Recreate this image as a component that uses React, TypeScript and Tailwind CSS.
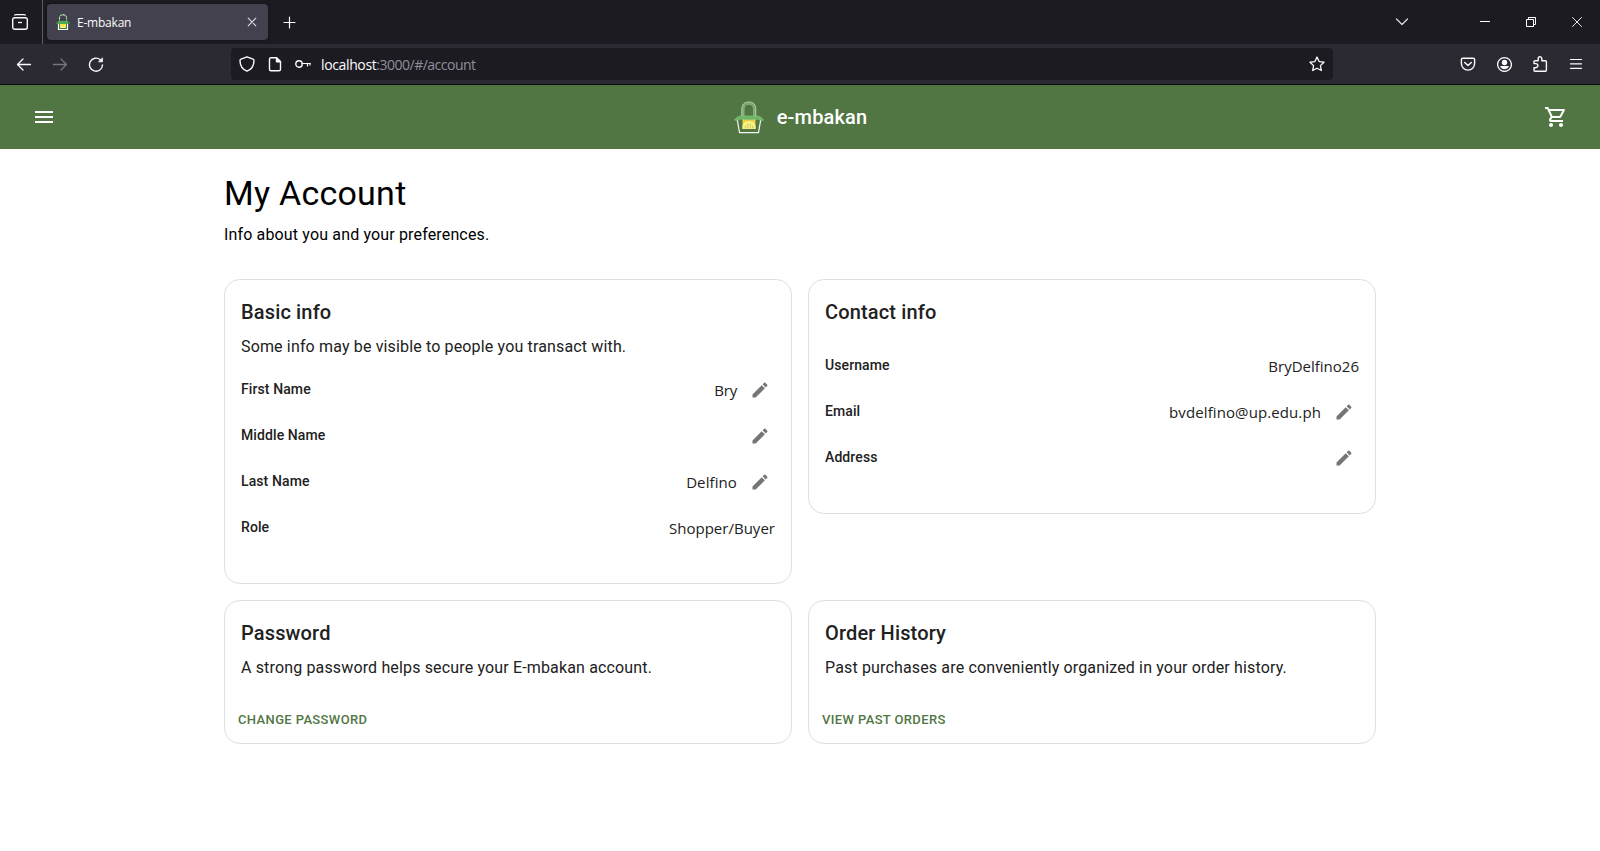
import React from "react";

type Row = { label: string; value: string; editable: boolean; valueClass?: string };

const basicRows: Row[] = [
  { label: "First Name", value: "Bry", editable: true, valueClass: "tracking-[-0.2px]" },
  { label: "Middle Name", value: "", editable: true },
  { label: "Last Name", value: "Delfino", editable: true, valueClass: "tracking-[0.1px]" },
  { label: "Role", value: "Shopper/Buyer", editable: false, valueClass: "tracking-[0.02px]" },
];

const contactRows: Row[] = [
  { label: "Username", value: "BryDelfino26", editable: false, valueClass: "tracking-normal" },
  { label: "Email", value: "bvdelfino@up.edu.ph", editable: true, valueClass: "tracking-[0.1px]" },
  { label: "Address", value: "", editable: true },
];

function Basket({ className }: { className: string }) {
  return (
    <svg className={className} viewBox="0 0 30 33" fill="none">
      <path d="M8.800 16V8.500C8.800 4.300 11 2 14.800 2S20.800 4.300 20.800 8.500V16" stroke="#78a96c" strokeWidth="2" />
      <path d="M7.800 16V8.300C7.800 3.500 10.400 1 14.800 1S21.800 3.500 21.800 8.300V16" stroke="#c0dab8" strokeWidth=".9" />
      <path d="M10 16V9c0-3.800 1.700-5.800 4.800-5.800S19.600 5.200 19.600 9v7" stroke="#a3c998" strokeWidth=".7" />
      <path d="M3.300 19 5.500 31.700H24.500L26.700 19" stroke="#f4f8f0" strokeWidth="1.200" />
      <path d="M8.500 18H21.500V28H8.500Z" fill="#f3cf45" />
      <path d="M8.500 28v-2.500a6.500 5.500 0 0 1 13 0V28Z" fill="#f6f386" />
      <path d="M11.300 27.500v-3M13.800 27.500v-5M16.300 27.500v-5M18.800 27.500v-3" stroke="#c3bd4f" strokeWidth=".8" />
      <path d="M.5 19C2 16.800 4 15.200 6.500 15h17c2.500.2 4.500 1.800 6 4-2.500 1.200-4.500-.3-6-.9-2.500.6-5 .7-8.500.7s-6-.1-8.500-.7c-1.500.6-3.500 2.100-6 .9Z" fill="#6cb563" stroke="#93c888" strokeWidth=".6" />
    </svg>
  );
}

function Favicon() {
  return (
    <svg className="h-4 w-3.5" viewBox="0 0 14 16" fill="none">
      <path d="M3.500 8V4C3.500 1.700 5 .8 7 .8s3.500.9 3.500 3.200v4" stroke="#5cb860" strokeWidth="1" />
      <path d="M3.500 5V3.700C3.500 1.700 5 .8 7 .8s3.500.9 3.500 2.900V5" stroke="#dff0d8" strokeWidth="1" strokeDasharray="2 1" />
      <path d="M2.500 9.500v6h9v-6" stroke="#f5f7f2" strokeWidth="1.200" fill="#2f7d3a" />
      <path d="M4 9h6v5H4Z" fill="#f9e04a" />
      <path d="M5 11h1v1H5ZM8 11h1v1H8ZM5 13h4v1H5Z" fill="#fff9b0" />
      <path d="M0 8.500h2V7h10v1.500h2v1h-2V10H2v-.5H0Z" fill="#4cab50" />
    </svg>
  );
}

function TabBar() {
  return (
    <div className="flex h-11 items-center bg-[#1c1b22] text-[#fbfbfe]">
      <div className="flex h-11 w-[43px] items-center border-r border-[#5b5b66] pl-3">
        <svg className="size-4" viewBox="0 0 16 16" fill="none" stroke="#fbfbfe">
          <path d="M2.700 1.200C3 .8 3.400.6 4 .6h8c.6 0 1 .2 1.300.6" strokeWidth="1.200" strokeLinecap="round" />
          <rect x=".7" y="3.700" width="14.600" height="11.600" rx="2" strokeWidth="1.400" />
          <path d="M6 8.500h4" strokeWidth="1.300" />
        </svg>
      </div>
      <div className="ml-1 flex h-9 w-[221px] items-center rounded bg-[#42414d] pr-2.5 pl-[9px] shadow-[0_0_3px_rgba(0,0,0,0.5)]">
        <Favicon />
        <span className="mt-0.5 ml-[7px] flex-1 font-['Open_Sans',sans-serif] text-[12px] leading-4 tracking-[-0.22px]">E-mbakan</span>
        <svg className="size-3" viewBox="0 0 12 12" fill="none" stroke="#dddde3" strokeWidth="1.100" strokeLinecap="round">
          <path d="m2.200 2.200 7.600 7.600M9.800 2.200 2.200 9.800" />
        </svg>
      </div>
      <svg className="ml-3.5 size-3.5" viewBox="0 0 14 14" fill="none" stroke="#fbfbfe" strokeWidth="1.200" strokeLinecap="round">
        <path d="M7.500 2v11M2 7.500h11" />
      </svg>
      <div className="ml-auto flex items-center">
        <svg className="h-3 w-3.5" viewBox="0 0 14 12" fill="none" stroke="#dddde3" strokeWidth="1.200" strokeLinecap="round" strokeLinejoin="round">
          <path d="m1.500 3 5.500 5.500L12.500 3" />
        </svg>
        <svg className="ml-[71px] size-2.5" viewBox="0 0 10 10" stroke="#fff">
          <path d="M0 4.500h10" />
        </svg>
        <svg className="ml-9 size-2.5" viewBox="0 0 10 10" fill="none" stroke="#fff">
          <path d="M.5 2.500h7v7h-7ZM2.500 2.500v-2h7v7h-2" />
        </svg>
        <svg className="mr-[18px] ml-9 size-2.5" viewBox="0 0 10 10" fill="none" stroke="#fff" strokeWidth=".9">
          <path d="m.2.2 9.600 9.600M9.800.2.200 9.800" />
        </svg>
      </div>
    </div>
  );
}

function NavBar() {
  return (
    <div className="flex h-[41px] items-center border-b border-[#0c0c0d] bg-[#2b2a33] text-[#fbfbfe]">
      <svg className="ml-4 h-4 w-4" viewBox="0 0 16 16" fill="none" stroke="#fbfbfe" strokeWidth="1.300" strokeLinecap="round" strokeLinejoin="round">
        <path d="M14.500 8.500h-13M7 3 1.500 8.500 7 14" />
      </svg>
      <svg className="ml-5 h-4 w-4" viewBox="0 0 16 16" fill="none" stroke="#76757e" strokeWidth="1.300" strokeLinecap="round" strokeLinejoin="round">
        <path d="M1.500 8.500h13M9 3l5.500 5.500L9 14" />
      </svg>
      <svg className="ml-5 h-4 w-4" viewBox="0 0 16 16" fill="none" stroke="#fbfbfe" strokeWidth="1.400" strokeLinecap="round" strokeLinejoin="round">
        <path d="M14.500 9a6.500 6.500 0 1 1-2.200-5.200l1 1" />
        <path d="M14.500 2.200v3.600h-3.600Z" fill="#fbfbfe" strokeWidth=".8" />
      </svg>
      <div className="ml-[127px] flex h-8 w-[1102px] items-center rounded bg-[#1c1b22] pr-2 pl-2">
        <svg className="size-4" viewBox="0 0 16 16" fill="none" stroke="#fbfbfe" strokeWidth="1.400" strokeLinejoin="round">
          <path d="M8 .8 14 3.200c.7.3 1 .6 1 1.300 0 4.500-2 8.700-7 10.700C3 13.200 1 9 1 4.500c0-.7.3-1 1-1.300Z" />
        </svg>
        <svg className="ml-3 size-4" viewBox="0 0 16 16" fill="none" stroke="#fbfbfe" strokeWidth="1.400" strokeLinejoin="round">
          <path d="M9.500 1.700H4A1.500 1.500 0 0 0 2.500 3.200v10.100A1.500 1.500 0 0 0 4 14.800h8a1.500 1.500 0 0 0 1.500-1.500V5.700Z" />
          <path d="M9.500 1.700v4h4Z" fill="#fbfbfe" />
        </svg>
        <svg className="ml-3 size-4" viewBox="0 0 16 16" fill="none" stroke="#fbfbfe" strokeWidth="1.400" strokeLinecap="round">
          <circle cx="4" cy="8" r="3.200" />
          <path d="M7.200 7.500h8.200M12.500 7.500v2.500M15 7.500V9" strokeWidth="1.200" />
        </svg>
        <span className="mt-0.5 ml-2.5 flex-1 font-['Open_Sans',sans-serif] text-[14px] leading-5 tracking-[-0.5px] text-[#8f8f9a]">
          <span className="tracking-[-0.37px] text-[#fbfbfe]">localhost</span>:3000/#/account
        </span>
        <svg className="size-4" viewBox="0 0 16 16" fill="none" stroke="#fbfbfe" strokeWidth="1.300" strokeLinejoin="round">
          <path d="m8 1 2.100 4.600 4.900.6-3.600 3.400.9 4.900L8 12.200l-4.300 2.300.9-4.900L1 6.200l4.900-.6Z" />
        </svg>
      </div>
      <svg className="ml-auto size-4" viewBox="0 0 16 16" fill="none" stroke="#fbfbfe" strokeWidth="1.400" strokeLinecap="round" strokeLinejoin="round">
        <path d="M2.800 2.200h10.400c.8 0 1.400.6 1.400 1.400V7.500a6.600 6.600 0 0 1-13.200 0V3.600c0-.8.6-1.400 1.400-1.400Z" />
        <path d="m4.700 6.500 3.300 3 3.300-3" />
      </svg>
      <svg className="ml-5 size-4" viewBox="0 0 16 16" fill="none" stroke="#fbfbfe">
        <circle cx="8.500" cy="8.500" r="6.900" strokeWidth="1.300" />
        <circle cx="8.500" cy="6.500" r="2.700" fill="#fbfbfe" stroke="none" />
        <path d="M4.100 10h8.800c-.4 1.800-2.200 3.200-4.400 3.200s-4-1.400-4.400-3.200Z" fill="#fbfbfe" stroke="none" />
      </svg>
      <svg className="ml-5 size-4" viewBox="0 0 16 16" fill="none" stroke="#fbfbfe" strokeWidth="1.400" strokeLinejoin="round">
        <path d="M2 7V5.700c0-.6.400-1 1-1h3.200V2.600a1.800 1.800 0 0 1 3.600 0v2.100h3.600c.6 0 1 .4 1 1v8.500c0 .6-.4 1-1 1H3c-.6 0-1-.4-1-1v-2.500h1.800a2.050 2.050 0 0 0 0-4.100H2Z" />
      </svg>
      <svg className="mr-4 ml-5 size-4" viewBox="0 0 16 16" fill="none" stroke="#fbfbfe" strokeWidth="1.200" strokeLinecap="round">
        <path d="M2.500 3.500h11M2.500 7.800h11M2.500 12.300h11" />
      </svg>
    </div>
  );
}

function AppHeader() {
  return (
    <header className="flex h-16 items-center justify-between bg-[#517644] pr-8 pl-8 text-white">
      <svg className="size-6" viewBox="0 0 24 24" fill="currentColor">
        <path d="M3 18h18v-2H3v2zm0-5h18v-2H3v2zm0-7v2h18V6H3z" />
      </svg>
      <div className="flex items-center pl-px">
        <Basket className="h-[33px] w-[30px]" />
        <span className="ml-[13px] text-[20px] leading-8 font-medium tracking-[0.15px]">e-mbakan</span>
      </div>
      <svg className="size-6" viewBox="0 0 24 24" fill="currentColor">
        <path d="M15.550 13c.75 0 1.410-.41 1.750-1.030l3.580-6.490c.37-.66-.11-1.480-.87-1.480H5.210l-.94-2H1v2h2l3.600 7.590-1.350 2.440C4.520 15.370 5.480 17 7 17h12v-2H7l1.100-2h7.450zM6.160 6h12.150l-2.760 5H8.530L6.160 6zM7 18c-1.100 0-1.990.9-1.990 2S5.900 22 7 22s2-.9 2-2-.9-2-2-2zm10 0c-1.100 0-1.990.9-1.990 2s.89 2 1.990 2 2-.9 2-2-.9-2-2-2z" />
      </svg>
    </header>
  );
}

function InfoRow({ label, value, editable, valueClass = "" }: Row) {
  return (
    <div className="flex h-[46px] items-start justify-between">
      <span className="mt-[3px] text-[14px] leading-[22px] font-medium tracking-[0.1px]">{label}</span>
      <div className="flex h-[30px] items-center">
        <span className={`font-['Open_Sans',sans-serif] text-[15px] leading-6 ${valueClass}`}>{value}</span>
        {editable && (
          <button className="mr-[5px] ml-[13px]">
            <svg className="size-5" viewBox="0 0 24 24" fill="#757575">
              <path d="M3 17.250V21h3.750L17.810 9.940l-3.750-3.750L3 17.250zM20.710 7.040c.39-.39.39-1.020 0-1.410l-2.340-2.340c-.39-.39-1.020-.39-1.410 0l-1.830 1.830 3.750 3.750 1.830-1.830z" />
            </svg>
          </button>
        )}
      </div>
    </div>
  );
}

function Card({ title, className, children }: { title: string; className: string; children: React.ReactNode }) {
  return (
    <section className={`rounded-2xl border border-[#e0e0e0] px-4 pt-4 text-[#212121] ${className}`}>
      <h2 className="text-[20px] leading-8 font-medium tracking-[0.15px]">{title}</h2>
      {children}
    </section>
  );
}

export default function App() {
  return (
    <div className="flex h-[851px] flex-col overflow-hidden bg-white font-[Roboto,sans-serif]">
      <TabBar />
      <NavBar />
      <AppHeader />
      <main className="mx-auto w-[1152px] pt-[23px]">
        <h1 className="text-[34px] leading-[42px] tracking-[0.25px] text-black">My Account</h1>
        <p className="mt-[9px] text-[16px] leading-6 tracking-[0.15px] text-black">Info about you and your preferences.</p>
        <div className="mt-8 grid grid-cols-2 items-start gap-4">
          <Card title="Basic info" className="h-[305px]">
            <p className="mt-[7px] text-[16px] leading-6 tracking-[0.15px]">Some info may be visible to people you transact with.</p>
            <div className="mt-4">
              {basicRows.map((r) => (
                <InfoRow key={r.label} {...r} />
              ))}
            </div>
          </Card>
          <Card title="Contact info" className="h-[235px]">
            <div className="mt-[23px]">
              {contactRows.map((r) => (
                <InfoRow key={r.label} {...r} />
              ))}
            </div>
          </Card>
          <Card title="Password" className="h-[144px]">
            <p className="mt-[7px] text-[16px] leading-6 tracking-[0.15px]">A strong password helps secure your E-mbakan account.</p>
            <button className="mt-[29px] -ml-[3px] text-[13px] leading-[22px] font-medium tracking-[0.37px] text-[#517644]">CHANGE PASSWORD</button>
          </Card>
          <Card title="Order History" className="h-[144px]">
            <p className="mt-[7px] text-[16px] leading-6 tracking-[0.15px]">Past purchases are conveniently organized in your order history.</p>
            <button className="mt-[29px] -ml-[3px] text-[13px] leading-[22px] font-medium tracking-[0.37px] text-[#517644]">VIEW PAST ORDERS</button>
          </Card>
        </div>
      </main>
    </div>
  );
}
